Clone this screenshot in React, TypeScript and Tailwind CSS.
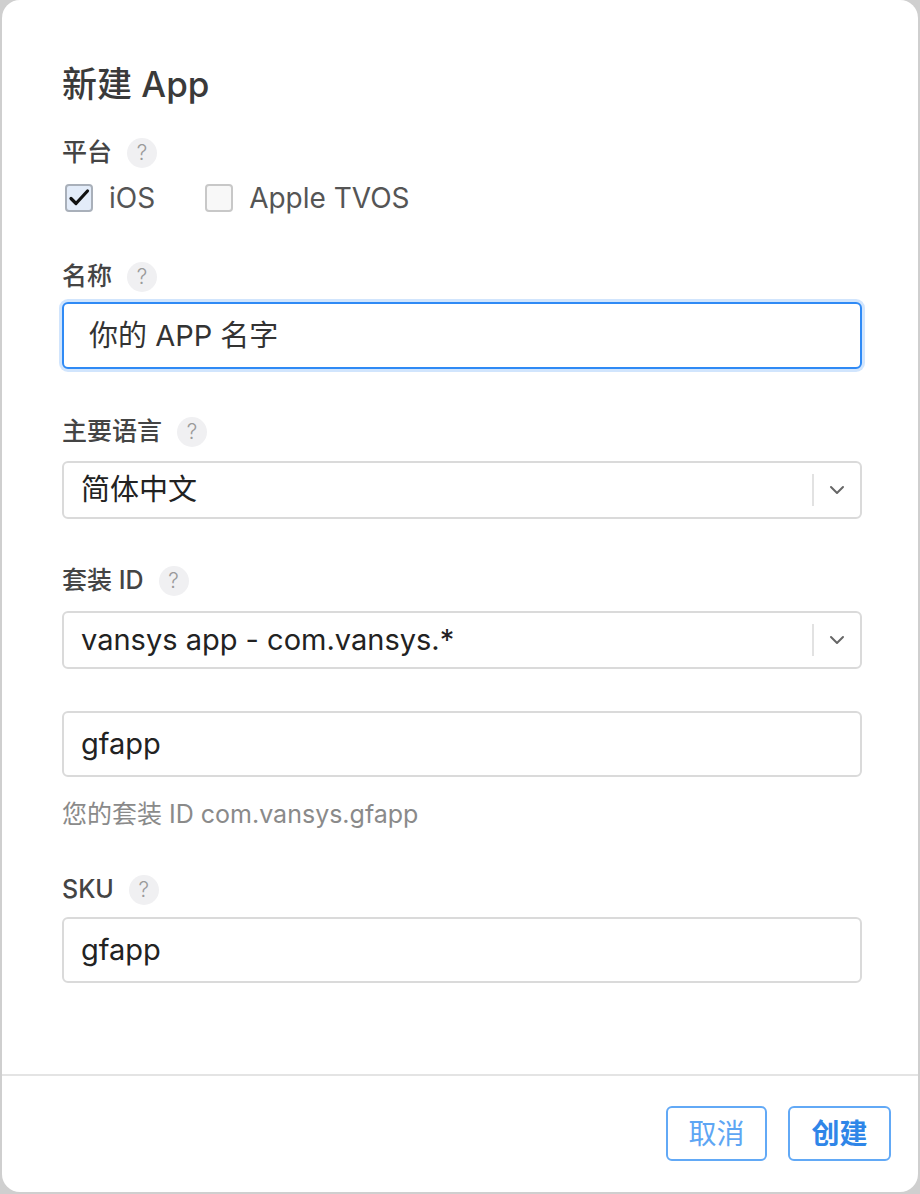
import React from 'react';

const font = { fontFamily: 'Inter, "Noto Sans CJK SC", sans-serif' };

const Help: React.FC = () => (
  <span className="ml-[15px] inline-flex h-[30px] w-[30px] items-center justify-center rounded-full bg-[#f0f0f2] text-[21px] font-light text-[#9a9a9a]">
    ?
  </span>
);

const Label: React.FC<{ text: string; className?: string }> = ({ text, className = '' }) => (
  <div className={`flex h-[30px] items-center text-[25px] font-medium text-[#444] ${className}`}>
    <span>{text}</span>
    <Help />
  </div>
);

const Checkbox: React.FC<{ checked?: boolean; label: string }> = ({ checked, label }) => (
  <label className="flex items-center">
    <span
      className={`flex h-[28px] w-[28px] items-center justify-center rounded-[4px] border-2 ${
        checked ? 'border-[#a9b0ba] bg-[#e3ecf9]' : 'border-[#c8c8c8] bg-[#f8f8f8]'
      }`}
    >
      {checked && (
        <svg width="22" height="22" viewBox="0 0 22 22" fill="none">
          <path d="M3 11.5l5 5L19.5 4" stroke="#111" strokeWidth="3.2" strokeLinecap="round" strokeLinejoin="round" />
        </svg>
      )}
    </span>
    <span className="ml-[16px] text-[28px] text-[#555]">{label}</span>
  </label>
);

const Select: React.FC<{ value: string; className?: string }> = ({ value, className = '' }) => (
  <div className={`flex h-[58px] items-center rounded-[6px] border-2 border-[#dadada] bg-white ${className}`}>
    <span className="flex-1 pl-[17px] text-[29px] text-[#222]">{value}</span>
    <span className="h-[32px] w-[2px] bg-[#e2e2e2]" />
    <span className="flex w-[46px] items-center justify-center">
      <svg width="16" height="10" viewBox="0 0 16 10" fill="none">
        <path d="M2 2l6 6 6-6" stroke="#666" strokeWidth="2" strokeLinecap="round" strokeLinejoin="round" />
      </svg>
    </span>
  </div>
);

const TextField: React.FC<{ value: string; className?: string }> = ({ value, className = '' }) => (
  <div className={`flex h-[66px] items-center rounded-[6px] border-2 border-[#dadada] bg-white pl-[17px] text-[29px] text-[#222] ${className}`}>
    {value}
  </div>
);

export default function App() {
  return (
    <div className="min-h-[1194px] w-[920px] bg-[#cfcfcf] px-[2px] pb-[2px]" style={font}>
      <div className="flex h-[1192px] flex-col rounded-[18px] bg-white">
        <div className="flex-1 pl-[60px] pr-[56px] pt-[64px]">
          <h1 className="h-[40px] text-[35px] font-medium leading-[40px] text-[#3a3a3a]">新建 App</h1>

          <Label text="平台" className="mt-[34px]" />
          <div className="mt-[15px] flex h-[30px] items-center gap-[50px] pl-[3px]">
            <Checkbox checked label="iOS" />
            <Checkbox label="Apple TVOS" />
          </div>

          <Label text="名称" className="mt-[49px]" />
          <div className="mt-[10px] flex h-[67px] items-center rounded-[6px] border-2 border-[#2f8af5] bg-white pl-[25px] text-[29px] text-[#333] shadow-[0_0_0_3px_rgba(47,138,245,0.22)]">
            你的 APP 名字
          </div>

          <Label text="主要语言" className="mt-[48px]" />
          <Select value="简体中文" className="mt-[14px]" />

          <Label text="套装 ID" className="mt-[47px]" />
          <Select value="vansys app - com.vansys.*" className="mt-[15px]" />

          <TextField value="gfapp" className="mt-[42px]" />
          <div className="mt-[23px] flex h-[30px] items-center text-[25px] text-[#8a8a8a]">您的套装 ID com.vansys.gfapp</div>

          <Label text="SKU" className="mt-[45px]" />
          <TextField value="gfapp" className="mt-[12px]" />
        </div>

        <div className="flex h-[118px] items-start justify-end gap-[21px] border-t-2 border-[#e4e4e4] pr-[27px] pt-[30px]">
          <button className="flex h-[55px] w-[101px] items-center justify-center rounded-[6px] border-2 border-[#62a9f6] text-[28px] text-[#5ea6f4]">
            取消
          </button>
          <button className="flex h-[55px] w-[103px] items-center justify-center rounded-[6px] border-2 border-[#62a9f6] text-[28px] font-semibold text-[#2f86e8]">
            创建
          </button>
        </div>
      </div>
    </div>
  );
}
